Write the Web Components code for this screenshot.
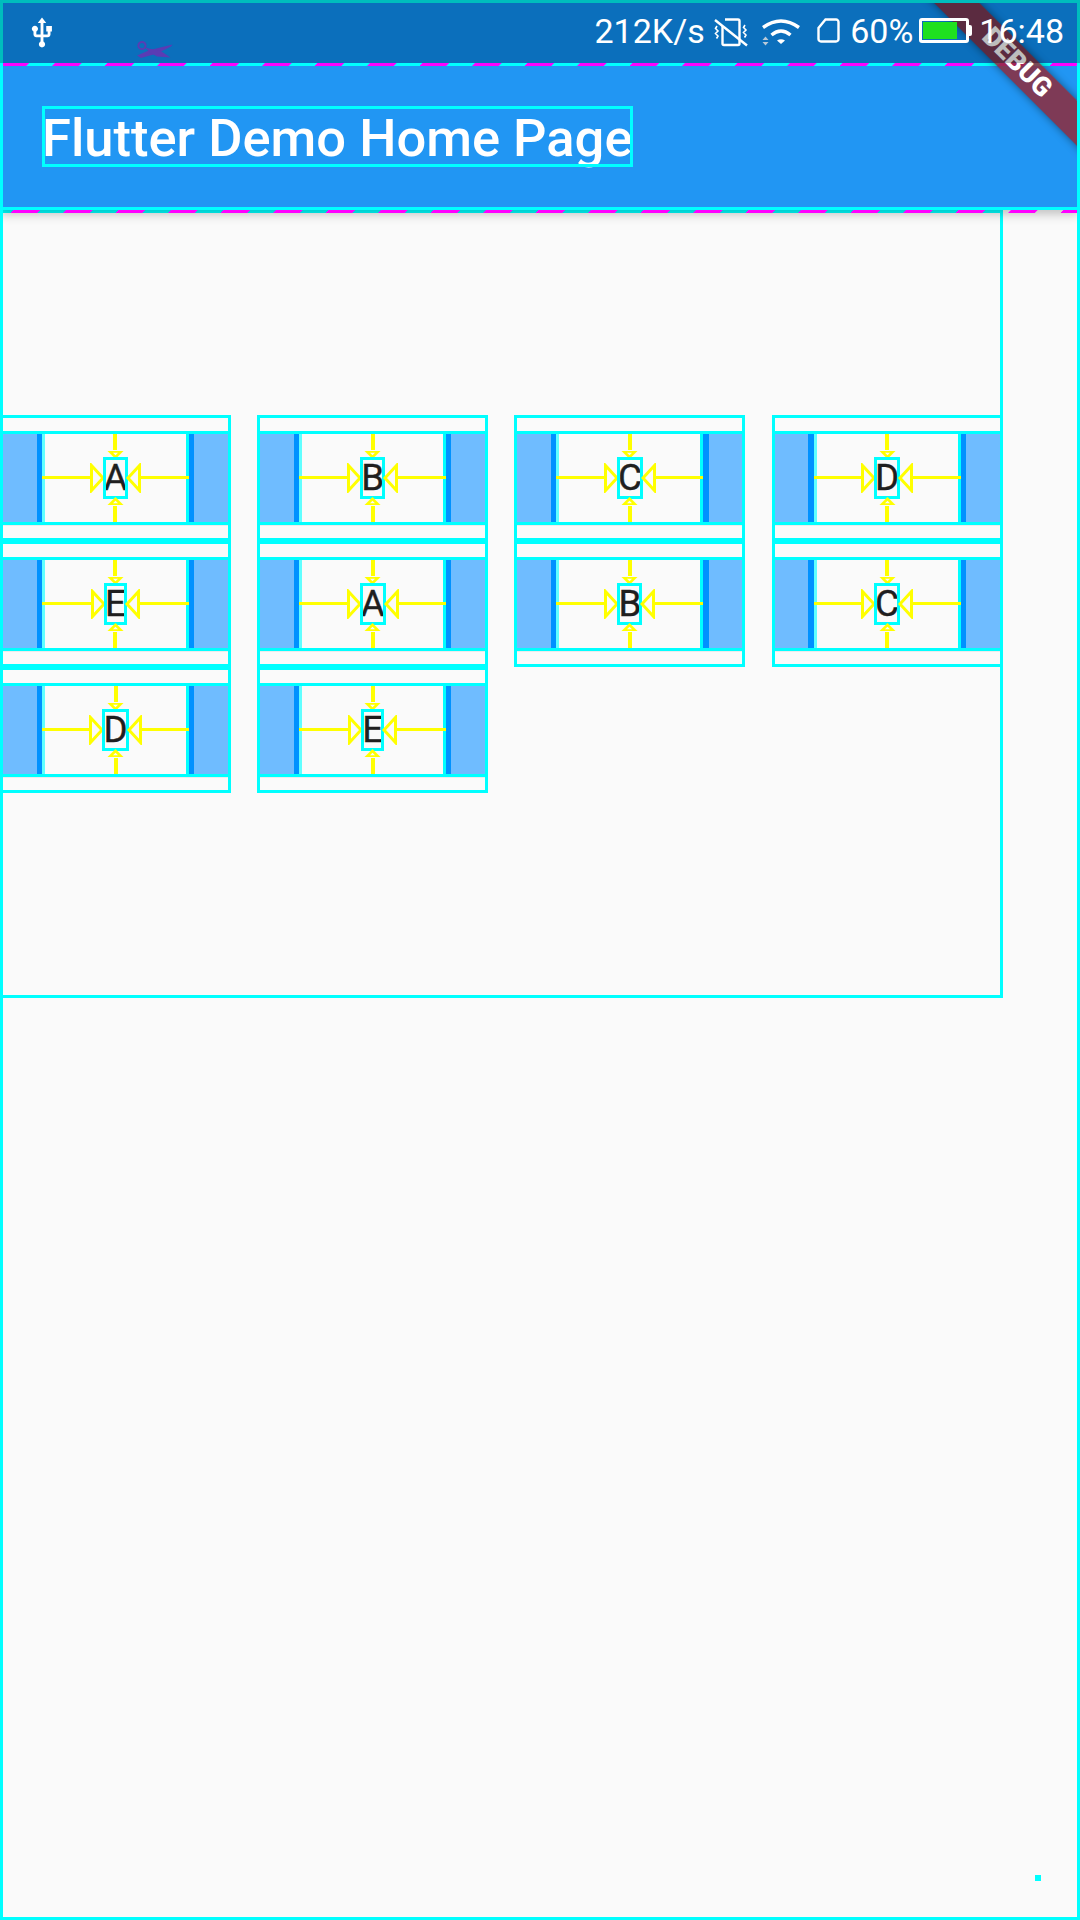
<!DOCTYPE html>
<html>
<head>
<meta charset="utf-8">
<title>Flutter Demo Home Page</title>
<style>
  html, body { margin: 0; padding: 0; background: #fafafa; }
</style>
</head>
<body>
<app-shell>
  <letter-tile>A</letter-tile>
  <letter-tile>B</letter-tile>
  <letter-tile>C</letter-tile>
  <letter-tile>D</letter-tile>
  <letter-tile>E</letter-tile>
  <letter-tile>A</letter-tile>
  <letter-tile>B</letter-tile>
  <letter-tile>C</letter-tile>
  <letter-tile>D</letter-tile>
  <letter-tile>E</letter-tile>
</app-shell>

<script>
class DashRule extends HTMLElement {
  constructor() {
    super();
    this.attachShadow({ mode: 'open' }).innerHTML = `
      <style>
        :host { display: block; position: absolute; left: 0; right: 0; height: 3px; overflow: hidden; }
        div {
          height: 3px;
          margin: 0 -6px;
          transform: skewX(-45deg);
          background: var(--gap, transparent) linear-gradient(90deg, #ff00ff 50%, transparent 50%) var(--phase, 0) 0 / 52.5px 3px repeat-x;
        }
      </style>
      <div></div>
    `;
  }
}
customElements.define('dash-rule', DashRule);

class StatusBar extends HTMLElement {
  constructor() {
    super();
    this.attachShadow({ mode: 'open' }).innerHTML = `
      <style>
        :host {
          display: flex; align-items: flex-start; box-sizing: border-box;
          position: absolute; top: 0; left: 0; width: 1080px; height: 63px;
          padding: 0 16px 0 25px;
          background: rgba(0, 0, 0, .26);
          color: #fff; font: 400 34px/40px Roboto, sans-serif;
          z-index: 4;
        }
        svg { display: block; flex: none; }
        .usb { margin-top: 16px; }
        .cut { margin: 40px 0 0 78px; }
        .right { display: flex; align-items: flex-start; margin-left: auto; }
        .txt { margin-top: 11px; white-space: nowrap; }
        .vib { margin: 18px 0 0 9.5px; }
        .wifi { margin: 18px 0 0 14px; }
        .sim { margin: 18px 0 0 17px; }
        .pct { margin-left: 10px; }
        .batt {
          position: relative; box-sizing: border-box; flex: none;
          width: 50px; height: 25px; margin: 18px 0 0 6px;
          border: 3px solid #fff; border-radius: 3px; padding: 1px;
        }
        .batt i { display: block; width: 34px; height: 17px; background: #1fe01f; }
        .batt::after {
          content: ''; position: absolute; right: -6px; top: 4px;
          width: 3px; height: 11px; background: #fff; border-radius: 0 2px 2px 0;
        }
        .time { margin-left: 10px; }
      </style>
      <svg class="usb" width="34" height="34" viewBox="0 0 24 24" fill="#fff"><path d="M15 7v4h1v2h-3V5h2l-3-4-3 4h2v8H8v-2.07c.7-.37 1.2-1.08 1.2-1.93 0-1.21-.99-2.2-2.2-2.2-1.21 0-2.2.99-2.2 2.2 0 .85.5 1.56 1.2 1.93V13c0 1.11.89 2 2 2h3v3.05c-.71.37-1.2 1.1-1.2 1.95 0 1.22.99 2.2 2.2 2.2 1.21 0 2.2-.98 2.2-2.2 0-.85-.49-1.58-1.2-1.95V15h3c1.11 0 2-.89 2-2v-2h1V7h-4z"/></svg>
      <svg class="cut" width="36" height="19" viewBox="0 0 36 19" fill="#5a3cb4">
        <circle cx="5" cy="5.5" r="3.6" fill="none" stroke="#5a3cb4" stroke-width="2"/>
        <path d="M0 15.5 L13 10 L35.5 4.5 L34 6.5 L20 13.5 L4 18 Z"/>
        <path d="M8 7.5 L14 9 L23 10.5 L33.5 17.5 L20 16.5 L13 12.5 Z"/>
      </svg>
      <div class="right">
        <span class="txt">212K/s</span>
        <svg class="vib" width="34" height="30" viewBox="0 0 34 30" fill="none" stroke="#fff" stroke-width="2.4">
          <path d="M11 1.5 H24 a1.5 1.5 0 0 1 1.5 1.5 V25.5 a1.5 1.5 0 0 1 -1.5 1.5 H10 a1.5 1.5 0 0 1 -1.5 -1.5 V8"/>
          <path d="M1 2 L33 27.5"/>
          <path stroke-width="1.6" d="M3 8 l-1.5 2.5 l2.5 2.5 l-2.5 2.5 l2.5 2.5 l-1.5 2.5 M31 7 l-1.5 2.5 l2.5 2.5 l-2.5 2.5 l2.5 2.5 l-1.5 2.5"/>
        </svg>
        <svg class="wifi" width="38" height="28" viewBox="0 0 38 28" fill="none" stroke="#fff" stroke-width="3.4">
          <path d="M1 9.5 Q19 -3.5 37 9.5"/>
          <path d="M9.5 17 Q19 9 28.5 17"/>
          <path stroke="none" fill="#fff" d="M15 22.5 Q19 20 23 22.5 L19 26 Z"/>
          <path stroke="none" fill="#b9c9d8" d="M0.5 22 L3.5 18.5 L6.5 22 Z M0.5 24 L6.5 24 L3.5 27.5 Z"/>
        </svg>
        <svg class="sim" width="23" height="25" viewBox="0 0 23 25" fill="none" stroke="#fff" stroke-width="2.4">
          <path d="M8.5 1.5 H19 a2.5 2.5 0 0 1 2.5 2.5 V21 a2.5 2.5 0 0 1 -2.5 2.5 H4 a2.5 2.5 0 0 1 -2.5 -2.5 V10 Z"/>
        </svg>
        <span class="txt pct">60%</span>
        <div class="batt"><i></i></div>
        <span class="txt time">16:48</span>
      </div>
    `;
  }
}
customElements.define('status-bar', StatusBar);

class DebugBanner extends HTMLElement {
  constructor() {
    super();
    this.attachShadow({ mode: 'open' }).innerHTML = `
      <style>
        :host {
          display: block; position: absolute; top: 3px; left: 3px;
          width: 1074px; height: 300px; overflow: hidden; z-index: 2;
        }
        div {
          position: absolute; left: 834px; top: 44.25px; width: 360px; height: 31.5px;
          transform: rotate(45deg);
          background: rgba(142, 42, 58, .85);
          box-shadow: 0 0 9px rgba(0, 0, 0, .45);
          color: #fff; font: 900 26.8px/31.5px Roboto, sans-serif;
          text-align: center;
        }
      </style>
      <div>DEBUG</div>
    `;
  }
}
customElements.define('debug-banner', DebugBanner);

class AppHeader extends HTMLElement {
  constructor() {
    super();
    this.attachShadow({ mode: 'open' }).innerHTML = `
      <style>
        :host {
          display: block; position: relative; z-index: 1; flex: none;
          padding-top: 63px; background: #0f96fe;
          box-shadow: 0 4px 10px rgba(0, 0, 0, .24);
        }
        .bar {
          position: relative; display: flex; align-items: center; box-sizing: border-box;
          height: 147px; padding: 0 42px;
          background: #2196f3;
          outline: 3px solid #00ffff; outline-offset: -3px;
        }
        .title {
          display: block; height: 61px;
          color: #fff; font: 500 52.5px/65px Roboto, sans-serif; white-space: nowrap;
          outline: 3px solid #00ffff; outline-offset: -3px;
        }
        .top { top: 0; --gap: #00ffff; --phase: 7px; }
        .under { top: 100%; --phase: 18px; }
      </style>
      <div class="bar">
        <dash-rule class="top"></dash-rule>
        <span class="title"><slot></slot></span>
        <dash-rule class="under"></dash-rule>
      </div>
    `;
  }
}
customElements.define('app-header', AppHeader);

class LetterTile extends HTMLElement {
  constructor() {
    super();
    this.attachShadow({ mode: 'open' }).innerHTML = `
      <style>
        :host {
          display: block; flex: none; box-sizing: border-box;
          width: 231px; height: 126px; padding: 15.75px 0;
          outline: 3px solid #00ffff; outline-offset: -3px;
        }
        .row {
          display: flex; height: 94.5px; background: #6fbcff;
          outline: 3px solid #00ffff; outline-offset: -3px;
          box-shadow: 0 1px 0 #ececec;
        }
        .pad { flex: 1; }
        .strip { flex: none; width: 5.25px; background: #0091ff; }
        .body {
          flex: none; width: 147px; background: #fafafa;
          display: grid; grid-template: 1fr auto 1fr / 1fr auto 1fr;
          box-sizing: border-box;
          box-shadow: inset 3px 0 0 #60ffff, inset -3px 0 0 #00ffff;
        }
        .cell { display: flex; min-width: 0; min-height: 0; }
        .v { flex-direction: column; align-items: center; }
        .h { align-items: center; }
        .line { flex: 1; background: #ffff00; }
        .v .line { width: 4px; }
        .h .line { height: 3px; }
        svg { display: block; flex: none; }
        .u svg { margin-top: -1px; }
        .n svg { margin-bottom: -1px; }
        .l svg { margin-right: -1px; }
        .r svg { margin-left: -1px; }
        .letter {
          color: #1f1f1f; font: 400 36.75px/40px Roboto, sans-serif;
          -webkit-text-stroke: .4px #1f1f1f;
          outline: 3px solid #00ffff; outline-offset: -2.25px;
        }
      </style>
      <div class="row">
        <div class="pad"></div>
        <div class="strip"></div>
        <div class="body">
          <div></div>
          <div class="cell v n">
            <div class="line"></div>
            <svg width="17" height="9" viewBox="0 0 17 9"><path d="M0.5 1 H16.5 L8.5 9 Z" fill="#ffff00"/><path d="M6 2.8 H11 L8.5 5.2 Z" fill="#fafafa"/></svg>
          </div>
          <div></div>
          <div class="cell h l">
            <div class="line"></div>
            <svg width="15" height="30" viewBox="0 0 15 30"><path d="M1.5 2.5 L13 15 L1.5 27.5 Z" fill="none" stroke="#ffff00" stroke-width="3"/></svg>
          </div>
          <span class="letter"><slot></slot></span>
          <div class="cell h r">
            <svg width="15" height="30" viewBox="0 0 15 30"><path d="M13.5 2.5 L2 15 L13.5 27.5 Z" fill="none" stroke="#ffff00" stroke-width="3"/></svg>
            <div class="line"></div>
          </div>
          <div></div>
          <div class="cell v u">
            <svg width="17" height="9" viewBox="0 0 17 9"><path d="M0.5 8 H16.5 L8.5 0 Z" fill="#ffff00"/><path d="M6 6.2 H11 L8.5 3.8 Z" fill="#fafafa"/></svg>
            <div class="line"></div>
          </div>
          <div></div>
        </div>
        <div class="strip"></div>
        <div class="pad"></div>
      </div>
    `;
  }
}
customElements.define('letter-tile', LetterTile);

class AppShell extends HTMLElement {
  constructor() {
    super();
    this.attachShadow({ mode: 'open' }).innerHTML = `
      <style>
        :host {
          display: flex; flex-direction: column; position: relative;
          width: 1080px; height: 1920px; overflow: hidden; background: #fafafa;
        }
        .wrap {
          display: flex; flex-wrap: wrap; align-content: center; column-gap: 26.2px;
          flex: none; width: 1002.75px; height: 787.5px;
          outline: 3px solid #00ffff; outline-offset: -3px;
        }
        .edge {
          position: absolute; inset: 0; z-index: 3;
          border: 3px solid #00ffff; pointer-events: none;
        }
        .dot {
          position: absolute; left: 1035px; top: 1875px;
          width: 6px; height: 6px; background: #00ffff;
        }
      </style>
      <app-header>Flutter Demo Home Page</app-header>
      <div class="wrap"><slot></slot></div>
      <debug-banner></debug-banner>
      <div class="dot"></div>
      <div class="edge"></div>
      <status-bar></status-bar>
    `;
  }
}
customElements.define('app-shell', AppShell);
</script>
</body>
</html>
